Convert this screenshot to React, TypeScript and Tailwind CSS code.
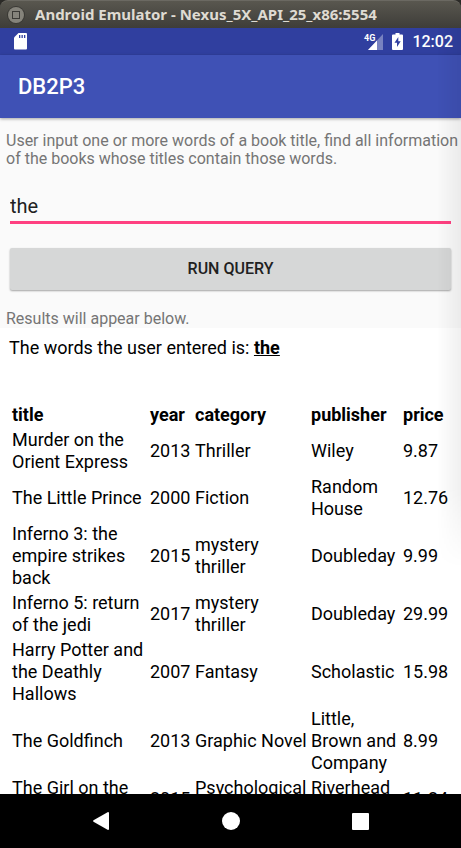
const books = [
  { title: 'Murder on the Orient Express', year: '2013', category: 'Thriller', publisher: 'Wiley', price: '9.87' },
  { title: 'The Little Prince', year: '2000', category: 'Fiction', publisher: 'Random House', price: '12.76' },
  { title: 'Inferno 3: the empire strikes back', year: '2015', category: 'mystery thriller', publisher: 'Doubleday', price: '9.99' },
  { title: 'Inferno 5: return of the jedi', year: '2017', category: 'mystery thriller', publisher: 'Doubleday', price: '29.99' },
  { title: 'Harry Potter and the Deathly Hallows', year: '2007', category: 'Fantasy', publisher: 'Scholastic', price: '15.98' },
  { title: 'The Goldfinch', year: '2013', category: 'Graphic Novel', publisher: 'Little, Brown and Company', price: '8.99' },
  { title: 'The Girl on the Train', year: '2015', category: 'Psychological thriller', publisher: 'Riverhead Books', price: '11.24' },
];

function WindowBar() {
  return (
    <div className="bg-[#2b2a27]">
      <div className="flex h-7 items-center gap-[11px] rounded-t-lg border-t border-[#6b6962] bg-linear-to-b from-[#59574f] to-[#3e3d39] pl-2">
        <button type="button" aria-label="Window menu" className="flex size-4 shrink-0 items-center justify-center rounded-full bg-[#85837b] ring-1 ring-[#3a3935]">
          <span className="size-2 border border-[#3a3935]" />
        </button>
        <span className="truncate font-['Noto_Sans',sans-serif] text-[15px] font-bold text-[#dfdbd2]">
          Android Emulator - Nexus_5X_API_25_x86:5554
        </span>
      </div>
    </div>
  );
}

function StatusBar() {
  return (
    <div className="flex h-[27px] items-center justify-between bg-[#303f9f] pr-2 pl-[14px] text-white">
      <svg width="13" height="17" viewBox="0 0 13 17" aria-label="SD card">
        <path fill="currentColor" d="M4.500 0H12q1 0 1 1v14.500q0 1-1 1H1q-1 0-1-1V4.500Z" />
        <path fill="#303f9f" d="M5 2h1.300v3H5zM7.500 2h1.300v3H7.500zM10 2h1.300v3H10z" />
      </svg>
      <div className="flex items-center gap-[9px]">
        <div className="flex items-start">
          <span className="-mr-[7px] text-[9px] leading-[9px] font-bold">4G</span>
          <svg width="15" height="16" viewBox="0 0 15 16" aria-label="Signal">
            <path fill="#fff" fillOpacity=".35" d="M15 0v16H0z" />
            <path fill="#fff" d="M9 6.400V16H0z" />
          </svg>
        </div>
        <svg width="11" height="17" viewBox="0 0 11 17" aria-label="Battery charging">
          <path fill="#fff" d="M3.500 0h4v1.500H10q1 0 1 1V16q0 1-1 1H1q-1 0-1-1V2.500q0-1 1-1h2.500z" />
          <path fill="#303f9f" d="M6.300 4 2.500 9.800H5V14l3.700-5.800H6.300z" />
        </svg>
        <span className="text-base leading-none font-medium">12:02</span>
      </div>
    </div>
  );
}

function ResultsTable() {
  return (
    <table className="mt-[43px] ml-[11px] w-[440px] table-fixed border-separate border-spacing-x-0 border-spacing-y-px text-left">
      <colgroup>
        <col className="w-[138px]" />
        <col className="w-[45px]" />
        <col className="w-[116px]" />
        <col className="w-[92px]" />
        <col />
      </colgroup>
      <thead>
        <tr>
          {['title', 'year', 'category', 'publisher', 'price'].map((name) => (
            <th key={name} scope="col" className="py-px pl-px font-bold">{name}</th>
          ))}
        </tr>
      </thead>
      <tbody>
        {books.map((b) => (
          <tr key={b.title}>
            <td className="py-px pl-px">{b.title}</td>
            <td className="py-px pl-px">{b.year}</td>
            <td className="py-px pl-px">{b.category}</td>
            <td className="py-px pl-px">{b.publisher}</td>
            <td className="py-px pl-px">{b.price}</td>
          </tr>
        ))}
      </tbody>
    </table>
  );
}

function NavBar() {
  return (
    <nav className="flex h-[54px] shrink-0 items-center justify-center gap-28 bg-black text-white">
      <button type="button" aria-label="Back">
        <svg width="18" height="20" viewBox="0 0 18 20">
          <path fill="currentColor" d="M16 1q1 0 1 1v16q0 1-1 1L1.500 10.700q-1-.7 0-1.400z" />
        </svg>
      </button>
      <button type="button" aria-label="Home" className="size-[18px] rounded-full bg-white" />
      <button type="button" aria-label="Overview" className="size-[17px] rounded-[1px] bg-white" />
    </nav>
  );
}

export default function App() {
  return (
    <div className="relative flex h-screen flex-col overflow-hidden bg-[#fafafa] font-[Roboto,sans-serif]">
      <WindowBar />
      <StatusBar />
      <header className="z-10 flex h-[63px] shrink-0 items-center bg-[#3f51b5] pl-[18px] shadow-[0_1px_3px_rgba(0,0,0,0.35)]">
        <h1 className="text-[22px] font-medium text-white">DB2P3</h1>
      </header>
      <main className="flex min-h-0 flex-1 flex-col overflow-hidden">
        <form className="flex flex-col" onSubmit={(e) => e.preventDefault()}>
          <label htmlFor="words" className="pt-[14px] pl-[6px] text-base leading-[18px] text-[#757575]">
            User input one or more words of a book title, find all information of the books whose titles contain those words.
          </label>
          <input
            id="words"
            type="text"
            defaultValue="the"
            className="mx-[10px] mt-[23px] h-[33px] border-b-3 border-[#ff4081] bg-transparent pb-px text-xl text-[#212121] outline-none"
          />
          <button type="submit" className="mx-[10px] mt-6 h-[42px] rounded-[2px] bg-[#d6d7d7] text-base font-medium text-[#212121] shadow-[0_1px_2px_rgba(0,0,0,0.35)]">
            RUN QUERY
          </button>
        </form>
        <p className="mt-[19px] px-[6px] text-base leading-[19px] text-[#757575]">Results will appear below.</p>
        <section className="flex-1 bg-white pt-[9px] text-lg leading-[22px] text-black">
          <p className="px-[9px]">
            The words the user entered is: <b className="underline">the</b>
          </p>
          <ResultsTable />
        </section>
      </main>
      <NavBar />
      <div className="pointer-events-none absolute top-7 right-0 z-20 h-[540px] w-6 bg-linear-to-r from-transparent to-black/6 mask-b-from-85%" />
    </div>
  );
}
